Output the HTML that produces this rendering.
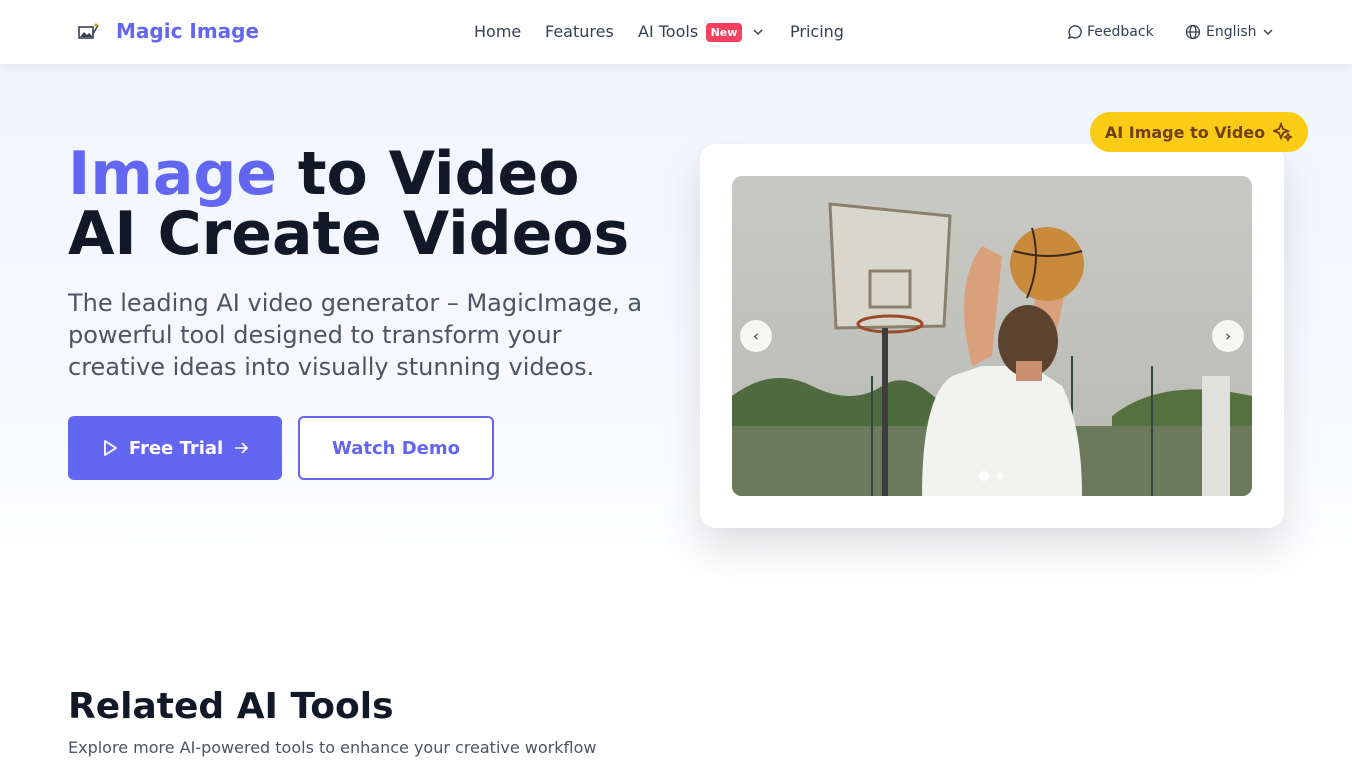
<!DOCTYPE html>
<html><head><meta charset="utf-8">
<style>
*{box-sizing:border-box;margin:0;padding:0}
body{width:1352px;height:760px;overflow:hidden;font-family:"DejaVu Sans","Liberation Sans",sans-serif;background:#fff;color:#111827;position:relative}
.hero{position:absolute;top:0;left:0;width:1352px;height:600px;background:linear-gradient(180deg,#eef4fd 0%,#f7f9fe 60%,#fff 100%)}
header{position:absolute;top:0;left:0;width:1352px;height:64px;background:#fff;box-shadow:0 2px 10px rgba(0,0,0,.08);z-index:5}
.logo{position:absolute;left:116px;top:19px;font-weight:bold;font-size:20px;color:#6366f1}
nav a{position:absolute;top:22px;font-size:16px;color:#374151;text-decoration:none}
.new{position:absolute;left:706px;top:23px;width:36px;height:19px;background:#f43f5e;border-radius:4px;color:#fff;font-size:11px;font-weight:bold;text-align:center;line-height:19px}
.right{position:absolute;top:24px;font-size:14px;color:#374151}
h1{position:absolute;left:68px;top:144px;font-size:60px;line-height:60px;font-weight:bold;color:#111827}
h1 span{color:#6366f1}
.sub{position:absolute;left:68px;top:287px;width:592px;font-size:24px;line-height:32px;color:#4b5563}
.btn1{position:absolute;left:68px;top:416px;width:214px;height:64px;background:#6366f1;border-radius:6px;color:#fff;font-weight:bold;font-size:18px;display:flex;align-items:center;justify-content:center;gap:10px}
.btn2{position:absolute;left:298px;top:416px;width:196px;height:64px;border:2px solid #6366f1;border-radius:6px;color:#6366f1;background:#fff;font-weight:bold;font-size:18px;display:flex;align-items:center;justify-content:center}
.card{position:absolute;left:700px;top:144px;width:584px;height:384px;background:#fff;border-radius:16px;box-shadow:0 20px 40px rgba(0,0,0,.12)}
.img{position:absolute;left:32px;top:32px;width:520px;height:320px;border-radius:10px;overflow:hidden}
.badge{position:absolute;left:1090px;top:112px;width:218px;height:40px;background:#facc15;border-radius:20px;color:#713f12;font-weight:bold;font-size:16px;display:flex;align-items:center;justify-content:center;gap:8px;z-index:3}
.arr{position:absolute;top:144px;width:32px;height:32px;border-radius:50%;background:rgba(255,255,255,.85);display:flex;align-items:center;justify-content:center;font-size:15px;color:#333}
h2{position:absolute;left:68px;top:686px;font-size:36px;font-weight:bold;color:#111827}
.p2{position:absolute;left:68px;top:738px;font-size:16px;color:#4b5563}
</style></head><body>
<div class="hero"></div>
<header>
<svg style="position:absolute;left:78px;top:22px" width="22" height="20" viewBox="0 0 22 20"><rect x="1" y="5" width="14" height="11" fill="none" stroke="#374151" stroke-width="1.6"/><path d="M2 15l4-5 3 3 2-2 4 4z" fill="#374151"/><path d="M15 12l5-9" stroke="#374151" stroke-width="1.5"/><circle cx="18" cy="3" r="1.6" fill="#f59e0b"/></svg>
<div class="logo">Magic Image</div>
<nav><a style="left:474px">Home</a><a style="left:545px">Features</a><a style="left:638px">AI Tools</a><a style="left:790px">Pricing</a></nav>
<div class="new">New</div>
<svg style="position:absolute;left:752px;top:27px" width="12" height="10" viewBox="0 0 12 10"><path d="M2 3l4 4 4-4" fill="none" stroke="#374151" stroke-width="1.5"/></svg>
<svg style="position:absolute;left:1067px;top:24px" width="16" height="16" viewBox="0 0 16 16"><path d="M2 14l1-3a6 6 0 1 1 2 2z" fill="none" stroke="#374151" stroke-width="1.4"/></svg>
<div class="right" style="left:1087px">Feedback</div>
<svg style="position:absolute;left:1185px;top:24px" width="16" height="16" viewBox="0 0 16 16" fill="none" stroke="#374151" stroke-width="1.3"><circle cx="8" cy="8" r="6.5"/><ellipse cx="8" cy="8" rx="3" ry="6.5"/><path d="M1.5 8h13"/></svg>
<div class="right" style="left:1206px">English</div>
<svg style="position:absolute;left:1262px;top:27px" width="12" height="10" viewBox="0 0 12 10"><path d="M2 3l4 4 4-4" fill="none" stroke="#374151" stroke-width="1.5"/></svg>
</header>
<h1><span>Image</span> to Video<br>AI Create Videos</h1>
<div class="sub">The leading AI video generator – MagicImage, a powerful tool designed to transform your creative ideas into visually stunning videos.</div>
<div class="btn1"><svg width="18" height="18" viewBox="0 0 18 18"><path d="M4 2l11 7-11 7z" fill="none" stroke="#fff" stroke-width="1.8" stroke-linejoin="round"/></svg>Free Trial<svg width="16" height="16" viewBox="0 0 16 16"><path d="M2 8h12M9 3l5 5-5 5" fill="none" stroke="#fff" stroke-width="1.6"/></svg></div>
<div class="btn2">Watch Demo</div>
<div class="badge">AI Image to Video<svg width="20" height="20" viewBox="0 0 20 20" fill="none" stroke="#713f12" stroke-width="1.8"><path d="M8 2l2 5 5 2-5 2-2 5-2-5-5-2 5-2z"/><path d="M15 12l1 2 2 1-2 1-1 2-1-2-2-1 2-1z"/></svg></div>
<div class="card">
<div class="img">
<svg width="520" height="320" viewBox="0 0 520 320">
<defs><linearGradient id="sky" x1="0" y1="0" x2="0" y2="1"><stop offset="0" stop-color="#c9c9c4"/><stop offset="1" stop-color="#b9bab4"/></linearGradient></defs>
<rect width="520" height="320" fill="url(#sky)"/>
<path d="M0 220q40-30 80-10t70 0 70 30v80H0z" fill="#4f6a3e"/>
<path d="M380 240q50-40 140-20v100H380z" fill="#56703f"/>
<rect x="0" y="250" width="520" height="70" fill="#6b7a5c"/>
<g stroke="#2f4a3a" stroke-width="2"><path d="M340 180v140M420 190v130M480 200v120M140 200v120"/></g>
<polygon points="98,28 218,40 212,150 104,152" fill="#d9d6cc" stroke="#8a8070" stroke-width="3"/>
<rect x="138" y="95" width="40" height="36" fill="none" stroke="#8a8070" stroke-width="3"/>
<ellipse cx="158" cy="148" rx="32" ry="8" fill="none" stroke="#9b4b2a" stroke-width="3"/>
<rect x="150" y="152" width="6" height="170" fill="#3d3d3d"/>
<path d="M190 320q0-100 30-120l30-10h50l30 20q20 40 20 110z" fill="#f2f2f0"/>
<path d="M240 190q-20-80 10-120l20 10-10 100z" fill="#d9a07c"/>
<path d="M290 190q10-70 30-110l18 10-20 100z" fill="#d9a07c"/>
<ellipse cx="296" cy="165" rx="30" ry="36" fill="#5b4330"/>
<rect x="284" y="185" width="26" height="20" fill="#c89070"/>
<circle cx="315" cy="88" r="37" fill="#c98a3c"/>
<path d="M282 75q35 10 68 0M300 52q10 35 -5 70" stroke="#3b2a1a" stroke-width="2" fill="none"/>
<rect x="470" y="200" width="28" height="120" fill="#e0e0dc"/>
</svg>
<div class="arr" style="left:8px">‹</div>
<div class="arr" style="left:480px">›</div>
<div style="position:absolute;left:247px;top:295px;width:10px;height:10px;border-radius:50%;background:#fff"></div>
<div style="position:absolute;left:264px;top:296px;width:8px;height:8px;border-radius:50%;background:rgba(255,255,255,.6)"></div>
</div>
</div>
<h2>Related AI Tools</h2>
<div class="p2">Explore more AI-powered tools to enhance your creative workflow</div>
</body></html>
